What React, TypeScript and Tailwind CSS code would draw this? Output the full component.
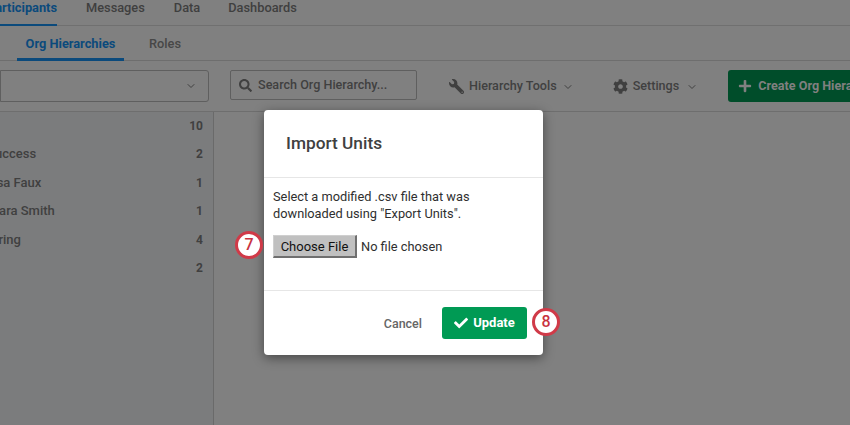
import { ChevronDown } from "lucide-react";
import { FaSearch, FaWrench, FaCog, FaPlus, FaCheck } from "react-icons/fa";

const rows = [
  { t: "Customer Success", n: "2", ml: "-ml-[73px]" },
  { t: "Melissa Faux", n: "1", ml: "-ml-[35px]" },
  { t: "Barbara Smith", n: "1", ml: "-ml-[28px]" },
  { t: "Engineering", n: "4", ml: "-ml-[48px]" },
  { t: "", n: "2", ml: "" },
];

function Badge({ n, cls }: { n: string; cls: string }) {
  return (
    <div className={`absolute w-[28px] h-[28px] rounded-full bg-white border-[3px] border-[#d03a48] flex items-center justify-center text-[#c9333f] text-[16px] font-medium ${cls}`}>
      {n}
    </div>
  );
}

export default function App() {
  return (
    <div className="relative w-[850px] h-[425px] overflow-hidden bg-[#808080] text-[#404040] font-['Roboto',sans-serif]">
      <div className="h-[26px] border-b border-[#707070] flex text-[12.8px] font-medium text-[#3f3f3f]">
        <div className="w-[57px] h-[26px] border-b-[2px] border-[#0b4a7c] text-[#0b4a7c] font-bold overflow-hidden flex justify-end leading-[16px]">
          <span>Participants</span>
        </div>
        <span className="ml-[29px] leading-[16px]">Messages</span>
        <span className="ml-[29px] leading-[16px]">Data</span>
        <span className="ml-[28px] leading-[16px]">Dashboards</span>
      </div>
      <div className="h-[35px] border-b border-[#6e6e6e] flex text-[12.8px] font-medium">
        <div className="ml-[17px] w-[107px] h-[35px] border-b-[3px] border-[#0b4a7c] text-[#0b4a7c] font-bold text-center leading-[35px]">Org Hierarchies</div>
        <span className="ml-[25px] leading-[35px] text-[#474747]">Roles</span>
      </div>
      <div className="h-[51px] border-b border-[#6e6e6e] flex items-start pt-[9px] text-[12.6px] font-medium whitespace-nowrap">
        <div className="w-[209px] shrink-0 h-[32px] border border-[#5f5f5f] rounded-r-[3px] flex items-center justify-end pr-[11px]">
          <ChevronDown size={12} strokeWidth={2} />
        </div>
        <div className="ml-[21px] w-[187px] shrink-0 h-[30px] border border-[#5f5f5f] rounded-[2px] flex items-center pl-[8px] gap-[6px] pt-[1px]">
          <FaSearch size={13} />
          <span>Search Org Hierarchy...</span>
        </div>
        <div className="ml-[32px] shrink-0 h-[32px] flex items-center pt-[1px]">
          <FaWrench size={15} className="-scale-x-100" />
          <span className="ml-[5px]">Hierarchy Tools</span>
          <ChevronDown size={12} strokeWidth={2} className="ml-[5px]" />
        </div>
        <div className="ml-[39px] shrink-0 h-[32px] flex items-center pt-[1px]">
          <FaCog size={15} />
          <span className="ml-[5px]">Settings</span>
          <ChevronDown size={12} strokeWidth={2} className="ml-[7px]" />
        </div>
        <div className="ml-[30px] shrink-0 h-[32px] w-[140px] bg-[#004d2a] rounded-[3px] flex items-center pl-[10px] text-[#808080] font-bold">
          <FaPlus size={14} className="shrink-0" />
          <span className="ml-[6px]">Create Org Hierarchy</span>
        </div>
      </div>
      <div className="flex h-[314px]">
        <div className="w-[214px] h-full bg-[#7b7c7d] border-r border-[#6a6a6a] text-[13px] font-medium pt-[6px]">
          <div className="h-[28px] flex justify-end pr-[10px] font-bold text-[12px] leading-[16px]">10</div>
          {rows.map((r, i) => (
            <div key={i} className="h-[28.5px] flex justify-between pr-[10px] leading-[16px] overflow-hidden">
              <span className={`whitespace-nowrap ${r.ml}`}>{r.t}</span>
              <span className="font-bold text-[12px]">{r.n}</span>
            </div>
          ))}
        </div>
      </div>

      <div className="absolute left-[264px] top-[110px] w-[279px] h-[245px] bg-white rounded-[4px] shadow-[0_3px_12px_rgba(0,0,0,0.45)] flex flex-col">
        <div className="h-[68px] border-b border-[#e6e6e6] pl-[22px] pt-[22px] text-[17.3px] leading-[22px] font-medium text-[#404040]">Import Units</div>
        <div className="h-[113px] border-b border-[#e6e6e6] px-[9px] pt-[10px] text-[12.8px] leading-[17px] text-[#2f2f2f]">
          <p>Select a modified .csv file that was<br />downloaded using "Export Units".</p>
          <div className="mt-[13px] flex items-center">
            <div className="w-[84px] h-[23px] bg-[#c0c0c0] border-r-2 border-b-2 border-[#6f6f6f] border-t border-l border-t-[#cfcfcf] border-l-[#cfcfcf] text-[#111] text-[13px] flex items-center justify-center">Choose File</div>
            <span className="ml-[4px]">No file chosen</span>
          </div>
        </div>
        <div className="flex-1 flex items-start justify-end pt-[16px] pr-[16px]">
          <span className="text-[12.5px] leading-[33px] font-medium text-[#666] mr-[20px]">Cancel</span>
          <div className="w-[85px] h-[32px] bg-[#009a54] rounded-[3px] text-white text-[13px] font-bold flex items-center justify-center gap-[5px]">
            <FaCheck size={14} />
            <span>Update</span>
          </div>
        </div>
      </div>
      <Badge n="7" cls="left-[235px] top-[231px]" />
      <Badge n="8" cls="left-[532px] top-[308px]" />
    </div>
  );
}
